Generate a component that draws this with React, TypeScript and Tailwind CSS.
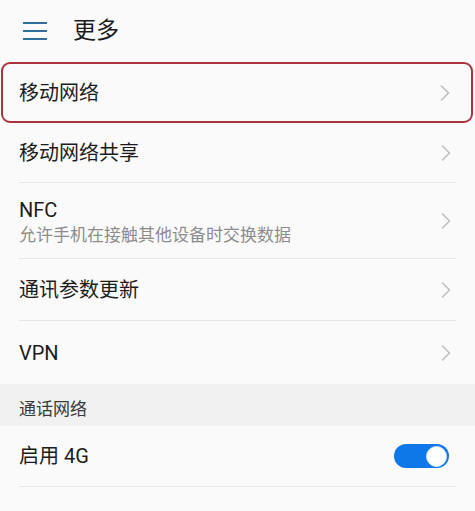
import React from 'react';

const font = { fontFamily: 'Roboto, "Noto Sans CJK SC", sans-serif' };

function Chevron() {
  return (
    <svg width="10" height="16" viewBox="0 0 10 16" className="shrink-0">
      <path d="M1.5 1 L8.5 8 L1.5 15" fill="none" stroke="#bdbdbd" strokeWidth="1.5" strokeLinecap="round" strokeLinejoin="round" />
    </svg>
  );
}

function Row({ title, sub, h = 'h-[60px]', divider = true }: { title: string; sub?: string; h?: string; divider?: boolean }) {
  return (
    <div className={`mx-[19px] ${h} flex items-center justify-between ${divider ? 'border-b border-[#e6e6e6]' : ''}`}>
      <div className={`flex flex-col ${sub ? 'pt-[4px]' : ''}`}>
        <span className="text-[20px] leading-[26px] text-[#1c1c1c]">{title}</span>
        {sub && <span className="text-[17px] leading-[25px] text-[#8c8c8c]">{sub}</span>}
      </div>
      <div className="mr-[5px]">
        <Chevron />
      </div>
    </div>
  );
}

export default function App() {
  return (
    <div className="w-[475px] min-h-[511px] bg-[#fafafa] flex flex-col" style={font}>
      {/* Header */}
      <div className="h-[62px] flex items-center pl-[23px]">
        <svg width="24" height="20" viewBox="0 0 24 20" className="shrink-0">
          <path d="M0 2h24M0 10h24M0 18h24" stroke="#2f6f9e" strokeWidth="2" />
        </svg>
        <span className="ml-[26px] text-[23px] text-[#1c1c1c]">更多</span>
      </div>

      {/* Highlighted row */}
      <div className="mx-[1px] mr-[2px] h-[61px] border-2 border-[#a9343f] rounded-[9px] flex items-center justify-between pl-[16px] pr-[21px]">
        <span className="text-[20px] leading-[26px] text-[#1c1c1c]">移动网络</span>
        <Chevron />
      </div>

      <Row title="移动网络共享" />
      <Row title="NFC" sub="允许手机在接触其他设备时交换数据" h="h-[76px]" />
      <Row title="通讯参数更新" h="h-[62px]" />
      <Row title="VPN" h="h-[63px]" divider={false} />

      {/* Section */}
      <div className="h-[42px] bg-[#f1f1f1] flex items-center pl-[19px] pt-[9px]">
        <span className="text-[17px] text-[#3a3a3a]">通话网络</span>
      </div>

      {/* 4G toggle */}
      <div className="mx-[19px] h-[61px] flex items-center justify-between border-b border-[#e6e6e6]">
        <span className="text-[20px] leading-[26px] text-[#1c1c1c]">启用 4G</span>
        <div className="mr-[7px] w-[55px] h-[24px] rounded-full bg-[#0f78e8] flex items-center justify-end pr-[2px]">
          <div className="w-[21px] h-[21px] rounded-full bg-white border border-[#d8e6f5]" />
        </div>
      </div>
    </div>
  );
}
